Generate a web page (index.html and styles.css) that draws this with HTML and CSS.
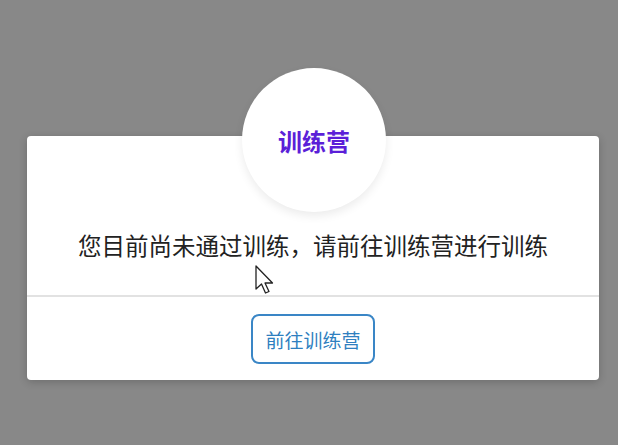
FILE: index.html
```html
<!DOCTYPE html>
<html lang="zh-CN">
<head>
    <meta charset="UTF-8">
    <meta name="viewport" content="width=device-width, initial-scale=1.0">
    <title>训练营</title>
    <link rel="stylesheet" href="styles.css">
</head>
<body>
    <div class="dialog">
        <div class="badge">训练营</div>
        <div class="message">您目前尚未通过训练，请前往训练营进行训练</div>
        <div class="footer">
            <button type="button" class="go-button">前往训练营</button>
        </div>
    </div>

    <svg class="cursor" width="24" height="34" viewBox="0 0 24 34">
        <path d="M2 1 L2 24 L7.5 19 L11.5 28 L15 26.5 L11 18 L18.5 18 Z" fill="#fff" stroke="#222" stroke-width="1.3" stroke-linejoin="round"/>
    </svg>
</body>
</html>
```

FILE: styles.css
```css
body {
    margin: 0;
    padding: 136px 19px 0 27px;
    background-color: #888888;
    font-family: "Noto Sans CJK SC", "Noto Sans", sans-serif;
    height: 445px;
    box-sizing: border-box;
    position: relative;
    overflow: hidden;
}
.dialog {
    display: flow-root;
    width: 572px;
    background: #fff;
    border-radius: 4px;
    box-shadow: 0 2px 8px rgba(0, 0, 0, 0.2);
}
.badge {
    width: 144px;
    height: 144px;
    margin: -68px auto 0;
    border-radius: 50%;
    background: #fff;
    box-shadow: 0 4px 10px rgba(0, 0, 0, 0.08);
    display: flex;
    align-items: center;
    justify-content: center;
    color: #5b1fd8;
    font-size: 24px;
    font-weight: bold;
    position: relative;
    left: 1px;
}
.message {
    padding: 18px 0 35px;
    text-align: center;
    font-size: 23.5px;
    line-height: 30px;
    color: #222;
}
.footer {
    border-top: 2px solid #e2e2e2;
    padding: 17px 0 16px;
    display: flex;
    justify-content: center;
}
.go-button {
    width: 124px;
    height: 50px;
    background: #fff;
    border: 2px solid #3a86c6;
    border-radius: 8px;
    color: #2f7fc0;
    font-family: inherit;
    font-size: 19px;
    cursor: pointer;
}
.cursor {
    position: absolute;
    left: 254px;
    top: 265px;
}
```
